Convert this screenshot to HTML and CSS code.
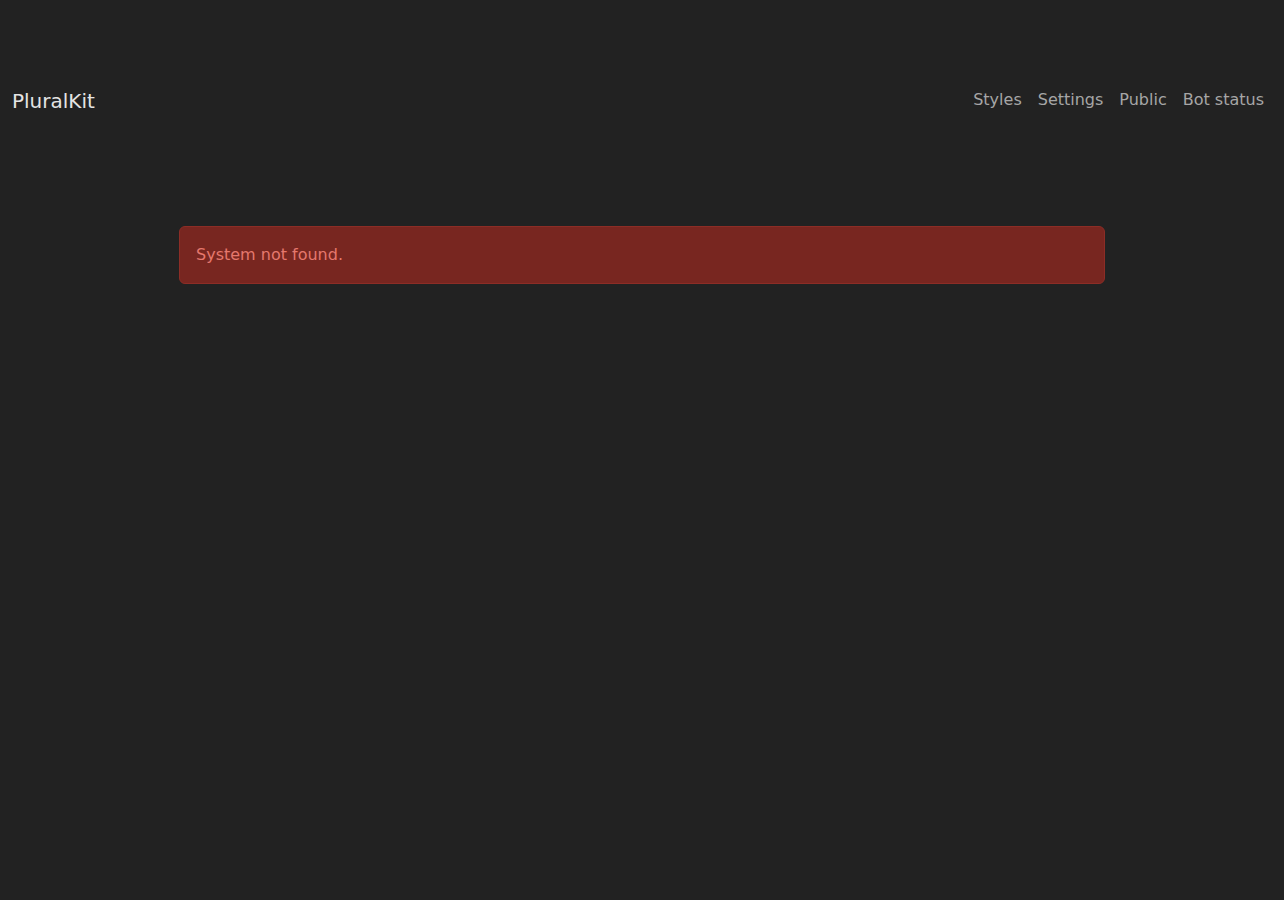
FILE: index.html
```html
<!DOCTYPE html>
<html lang="en">

<head>
    <meta charset="UTF-8">
    <meta name="viewport" content="width=device-width, initial-scale=1.0">
    <title>PluralKit</title>
    <link rel="stylesheet" href="styles.css">
</head>

<body>
    <div class="page-wrapper">
        <nav class="navbar">
            <a class="brand" href="#">PluralKit</a>
            <div class="nav-links">
                <a class="nav-link" href="#">Styles</a>
                <a class="nav-link" href="#">Settings</a>
                <a class="nav-link" href="#">Public</a>
                <a class="nav-link" href="#">Bot status</a>
            </div>
        </nav>
        <main class="content">
            <div class="alert">System not found.</div>
        </main>
    </div>
</body>

</html>
```

FILE: styles.css
```css
html,
body {
    margin: 0;
    background-color: #222222;
    font-family: "DejaVu Sans", Verdana, sans-serif;
    font-size: 16px;
    line-height: 1.5;
    color: #dddddd;
}

.page-wrapper {
    min-height: 100vh;
    padding-top: 80px;
    box-sizing: border-box;
}

.navbar {
    display: flex;
    align-items: center;
    justify-content: space-between;
    padding: 0 12px;
    height: 40px;
}

.brand {
    font-size: 20px;
    line-height: 30px;
    color: #e4e4e4;
    text-decoration: none;
    margin-top: 2px;
}

.nav-links {
    display: flex;
}

.nav-link {
    padding: 0 8px;
    line-height: 24px;
    color: #a6a6a6;
    text-decoration: none;
}

.content {
    width: 926px;
    margin: 106px auto 0;
}

.alert {
    background-color: #782620;
    border: 1px solid #8c2d26;
    border-radius: 6px;
    padding: 16px;
    color: #e5786d;
}
```
